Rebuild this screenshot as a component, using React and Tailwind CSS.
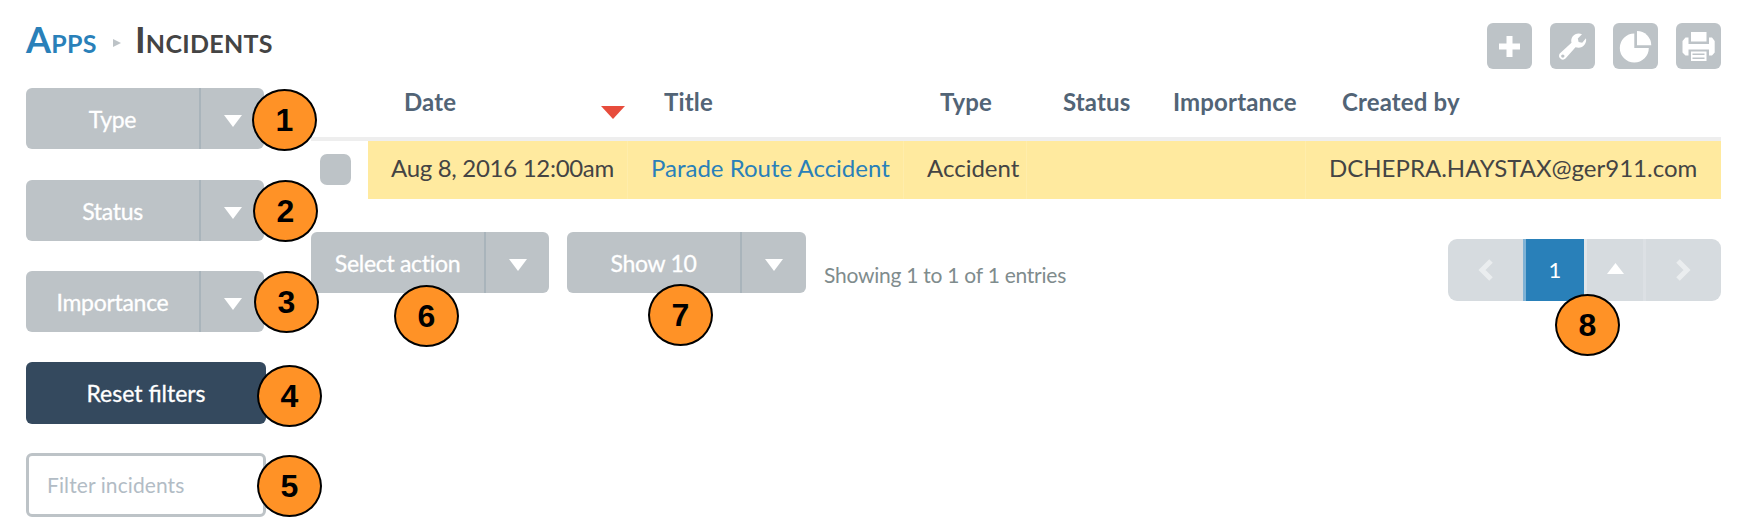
import React from "react";

const Caret = ({ className, up }) => (
  <svg viewBox="0 0 18 12" preserveAspectRatio="none" className={className} fill="currentColor">
    <path d={up ? "M0 12 9 0 18 12Z" : "M0 0H18L9 12Z"} />
  </svg>
);

const SplitButton = ({ label, className = "" }) => (
  <div className={`flex h-[61px] shrink-0 overflow-hidden rounded-[6px] bg-[#bdc3c7] text-white ${className}`}>
    <div className="flex w-[173px] items-center justify-center text-[23px] tracking-[-0.3px]">
      <span className="whitespace-nowrap [-webkit-text-stroke:0.3px_white]">{label}</span>
    </div>
    <div className="w-[2px] bg-[#a9b4bb]" />
    <div className="flex flex-1 items-center justify-center">
      <Caret className="mt-1 h-3 w-[18px]" />
    </div>
  </div>
);

const IconButton = ({ children }) => (
  <button className="h-[46px] w-[45px] overflow-hidden rounded-[6px] bg-[#bdc3c7]">
    <svg viewBox="0 0 45 46" className="h-[46px] w-[45px]" fill="#fff">
      {children}
    </svg>
  </button>
);

const Badge = ({ n, className }) => (
  <div
    className={`absolute flex h-[62px] w-[65px] items-center justify-center rounded-[50%] border-2 border-black bg-[#ff9226] font-['Liberation_Sans',sans-serif] text-[32px] font-bold leading-none text-black ${className}`}
  >
    {n}
  </div>
);

export default function App() {
  return (
    <div className="relative h-[527px] w-[1744px] overflow-hidden bg-white font-['Lato',sans-serif] text-[24px] leading-[30px] text-[#444]">
      <header className="flex h-[88px] justify-between pl-[26px] pr-[23px]">
        <h1 className="flex h-[61px] items-end text-[36px] font-bold leading-[44px] tracking-[0.3px] [font-variant-caps:small-caps]">
          <span className="text-[#2980b9]">Apps</span>
          <svg viewBox="0 0 8 8" className="mb-[14px] ml-4 h-2 w-2" fill="#bdc3c7">
            <path d="M0 0 8 4 0 8Z" />
          </svg>
          <span className="ml-[14px]">Incidents</span>
        </h1>
        <div className="flex gap-[18px] pt-[23px]">
          <IconButton>
            <path d="M19.500 13h6v7.500h7.500v6h-7.500v7.500h-6v-7.500h-7.500v-6h7.500z" />
          </IconButton>
          <IconButton>
            <path fillRule="evenodd" d="M32 11.200 27.800 15.400 28.600 19 32.200 19.800 36 15.300C37 20 33.500 24.800 28.500 24.800L25.500 24.300 15.500 35.600A3.900 3.900 0 0 1 9.800 30.400L21.500 19.800C20 14 25.500 8.600 32 11.200ZM12.800 31.400a1.700 1.700 0 1 0 0 3.400 1.700 1.700 0 0 0 0-3.400Z" />
          </IconButton>
          <IconButton>
            <path d="M21.300 10.500V25h14.500A14.500 14.500 0 1 1 21.300 10.500Z" />
            <path d="M24 8A14.300 14.300 0 0 1 38.300 22.200H24Z" />
          </IconButton>
          <IconButton>
            <path d="M15 9h15.500v9.500H15zM15 28.500h15.500V38H15z" />
            <path d="M9.500 14.500H12.500V21H33V14.500H36L38.700 18V29.500L36 32.500H33V26.500H12.500V32.500H9.500L6.500 29.500V18Z" />
            <path d="M16.500 30.500h12v1.500h-12zM16.500 34.500h12v1.500h-12z" fill="#bdc3c7" />
          </IconButton>
        </div>
      </header>

      <div className="flex">
        <aside className="flex w-[311px] shrink-0 flex-col pl-[26px]">
          <SplitButton label="Type" className="w-[238px]" />
          <SplitButton label="Status" className="mt-[31px] w-[238px]" />
          <SplitButton label="Importance" className="mt-[30px] w-[238px]" />
          <button className="mt-[30px] h-[62px] w-[240px] rounded-[6px] bg-[#34495e] text-[23px] text-white [-webkit-text-stroke:0.3px_white]">
            Reset filters
          </button>
          <input
            placeholder="Filter incidents"
            className="mt-[29px] h-[64px] w-[240px] rounded-[6px] border-[3px] border-[#bdc3c7] px-[18px] pb-[2px] text-[21px] tracking-[0.1px] placeholder:text-[#b2bcc5]"
          />
        </aside>

        <main className="w-[1410px]">
          <div className="flex h-[53px] border-b-4 border-[#eeeeee] font-bold leading-[28px] tracking-[0.15px] text-[#526476] [&>div]:whitespace-nowrap">
            <div className="w-[93px]" />
            <div className="flex w-[260px] justify-between">
              <span>Date</span>
              <Caret className="mr-[39px] mt-[18px] h-[13px] w-6 text-[#e74c3c]" />
            </div>
            <div className="w-[276px]">Title</div>
            <div className="w-[123px]">Type</div>
            <div className="w-[110px]">Status</div>
            <div className="w-[169px]">Importance</div>
            <div>Created by</div>
          </div>
          <div className="flex h-[58px] [&>div]:whitespace-nowrap">
            <div className="w-[57px] pl-[9px] pt-[13px]">
              <div className="h-[31px] w-[31px] rounded-[7px] bg-[#bdc3c7]" />
            </div>
            <div className="w-[260px] border-r border-[#ffedab] bg-[#ffea9f] pl-[23px] pt-3 tracking-[-0.3px]">Aug 8, 2016 12:00am</div>
            <div className="w-[276px] border-r border-[#ffedab] bg-[#ffea9f] pl-[23px] pt-3 text-[#2980b9]">Parade Route Accident</div>
            <div className="w-[123px] border-r border-[#ffedab] bg-[#ffea9f] pl-[23px] pt-3">Accident</div>
            <div className="w-[279px] border-r border-[#ffedab] bg-[#ffea9f]" />
            <div className="flex-1 bg-[#ffea9f] pl-[23px] pt-3">DCHEPRA.HAYSTAX@ger911.com</div>
          </div>
          <div className="flex pt-[33px]">
            <SplitButton label="Select action" className="w-[238px]" />
            <SplitButton label="Show 10" className="ml-[18px] w-[239px]" />
            <div className="ml-[18px] mt-[28px] text-[21px] tracking-[-0.25px] text-[#7f8c8d]">Showing 1 to 1 of 1 entries</div>
            <nav className="ml-auto mt-[7px] flex h-[62px] w-[273px] overflow-hidden rounded-[9px] bg-[#d6dbdf] text-white">
              <div className="flex w-[75px] items-center justify-center text-[#eaedef]">
                <svg viewBox="0 0 15 22" className="h-[22px] w-[15px]" fill="none" stroke="currentColor" strokeWidth="5">
                  <path d="M13 2 4 11 13 20" />
                </svg>
              </div>
              <div className="w-[3px] bg-[#7fb2d5]" />
              <div className="flex w-[58px] items-center justify-center bg-[#2980b9] text-[22px]">1</div>
              <div className="w-[3px] bg-[#e2e6e9]" />
              <div className="flex w-[56px] items-center justify-center">
                <Caret up className="mb-1 h-[11px] w-[17px]" />
              </div>
              <div className="w-[3px] bg-[#dce0e4]" />
              <div className="flex flex-1 items-center justify-center text-[#eaedef]">
                <svg viewBox="0 0 15 22" className="h-[22px] w-[15px]" fill="none" stroke="currentColor" strokeWidth="5">
                  <path d="M2 2 11 11 2 20" />
                </svg>
              </div>
            </nav>
          </div>
        </main>
      </div>

      <Badge n="1" className="left-[252px] top-[89px]" />
      <Badge n="2" className="left-[253px] top-[180px]" />
      <Badge n="3" className="left-[254px] top-[271px]" />
      <Badge n="4" className="left-[257px] top-[365px]" />
      <Badge n="5" className="left-[257px] top-[455px]" />
      <Badge n="6" className="left-[394px] top-[285px]" />
      <Badge n="7" className="left-[648px] top-[284px]" />
      <Badge n="8" className="left-[1555px] top-[294px]" />
    </div>
  );
}
